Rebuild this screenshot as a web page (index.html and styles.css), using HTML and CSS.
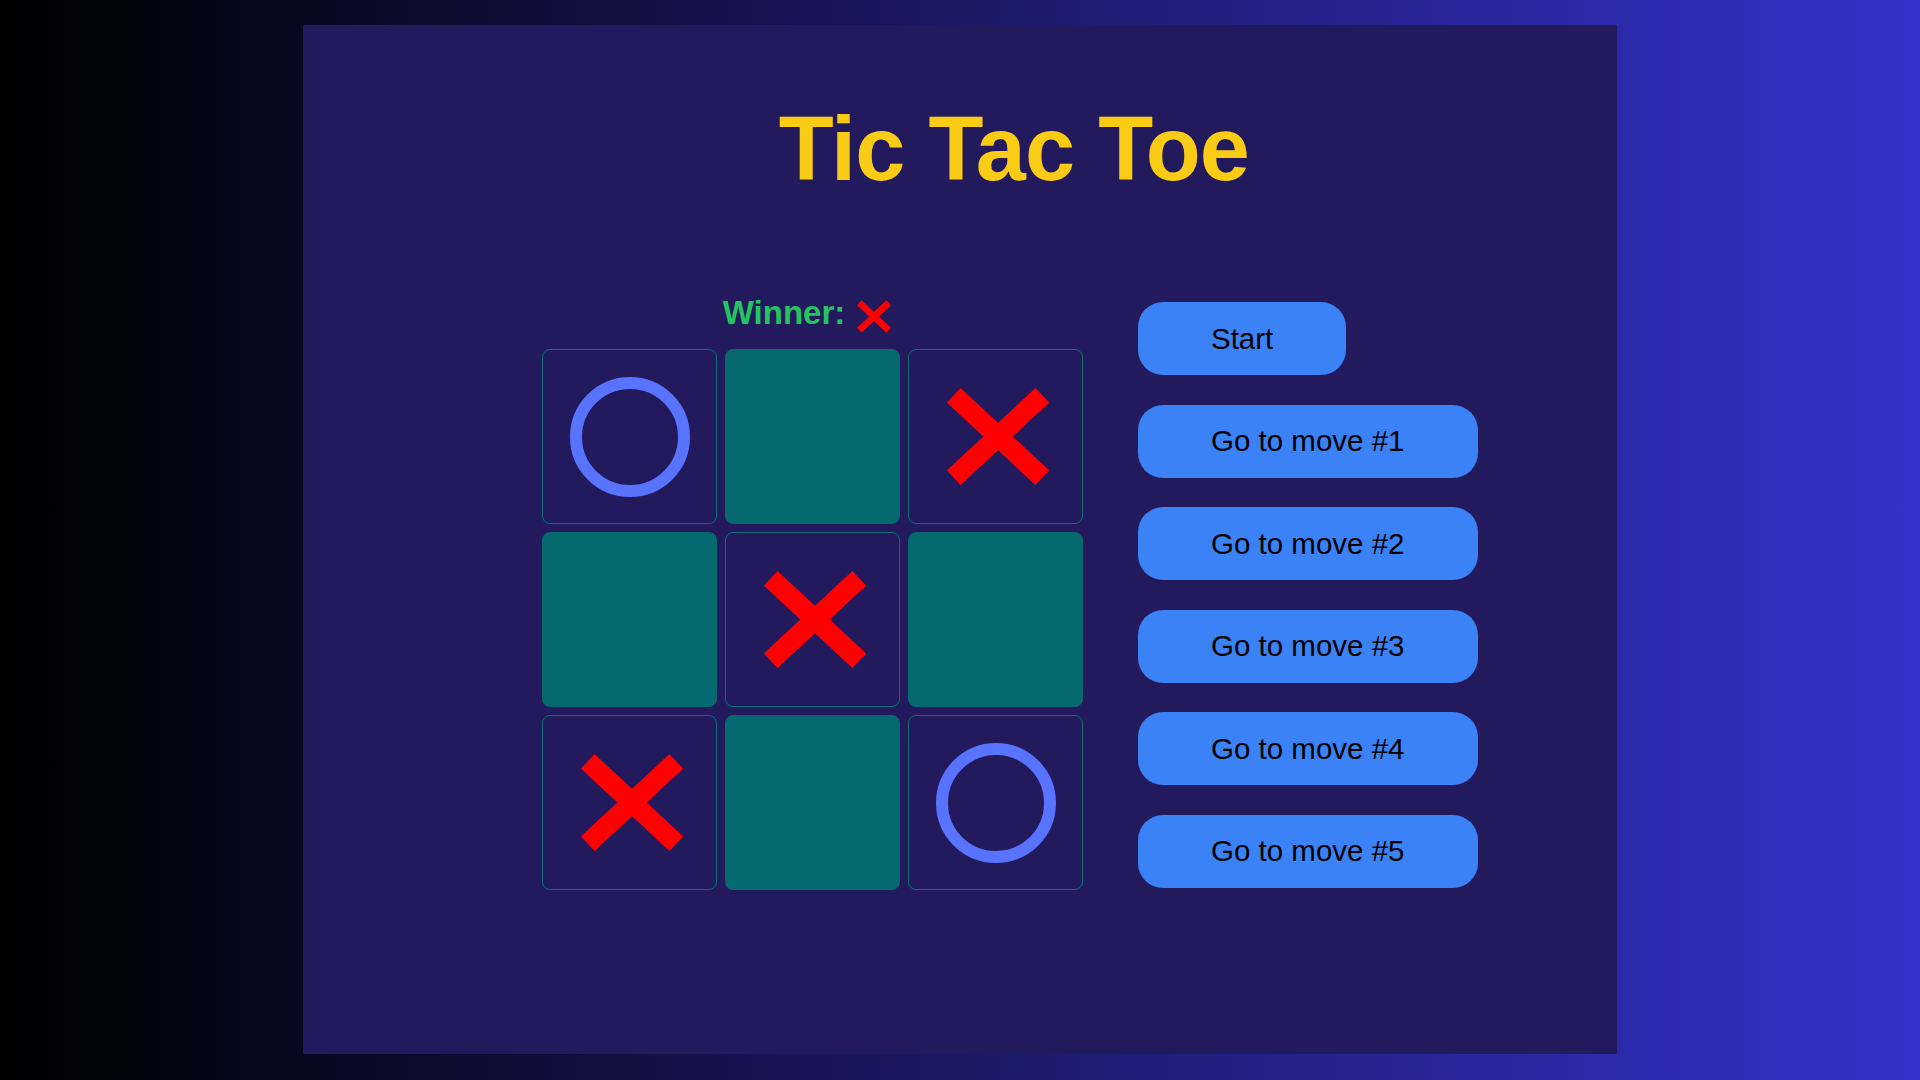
FILE: index.html
```html
<!DOCTYPE html>
<html lang="en">
<head>
<meta charset="utf-8">
<title>Tic Tac Toe</title>
<link rel="stylesheet" href="styles.css">
</head>
<body>
<main class="panel">
  <div class="game-wrap">
    <h1 class="title">Tic Tac Toe</h1>
    <div class="game">
      <div class="board-col">
        <div class="status"><span class="status-text">Winner:</span><svg class="x-small" viewBox="0 0 102 97" aria-label="X"><path d="M6.8 7.3 L95.2 89.7 M95.2 7.3 L6.8 89.7" /></svg></div>
        <div class="board">
          <button class="cell filled"><span class="o"></span></button>
          <button class="cell empty"></button>
          <button class="cell filled"><svg class="x-big" viewBox="0 0 102 97"><path d="M6.8 7.3 L95.2 89.7 M95.2 7.3 L6.8 89.7" /></svg></button>
          <button class="cell empty"></button>
          <button class="cell filled"><svg class="x-big" viewBox="0 0 102 97"><path d="M6.8 7.3 L95.2 89.7 M95.2 7.3 L6.8 89.7" /></svg></button>
          <button class="cell empty"></button>
          <button class="cell filled"><svg class="x-big" viewBox="0 0 102 97"><path d="M6.8 7.3 L95.2 89.7 M95.2 7.3 L6.8 89.7" /></svg></button>
          <button class="cell empty"></button>
          <button class="cell filled"><span class="o"></span></button>
        </div>
      </div>
      <ol class="moves">
        <li><button class="move-btn">Start</button></li>
        <li><button class="move-btn">Go to move #1</button></li>
        <li><button class="move-btn">Go to move #2</button></li>
        <li><button class="move-btn">Go to move #3</button></li>
        <li><button class="move-btn">Go to move #4</button></li>
        <li><button class="move-btn">Go to move #5</button></li>
      </ol>
    </div>
  </div>
</main>
</body>
</html>
```

FILE: styles.css
```css
* { box-sizing: border-box; }

html, body {
  margin: 0;
  padding: 0;
}

body {
  height: 1080px;
  overflow: hidden;
  background: linear-gradient(to right, #000000 0%, #3631cb 100%);
  font-family: "Liberation Sans", Arial, Helvetica, sans-serif;
  display: flex;
  justify-content: center;
  padding-top: 25px;
}

.panel {
  width: 1314px;
  height: 1029px;
  background: #221a5d;
  padding: 78.5px 0 0 239px;
}

.game-wrap {
  width: fit-content;
}

.title {
  margin: 0 0 99px 0;
  padding-left: 8px;
  text-align: center;
  color: #facc15;
  font-size: 90px;
  line-height: 90px;
  font-weight: 700;
  letter-spacing: -0.9px;
}

.game {
  display: flex;
  align-items: flex-start;
  gap: 55px;
}

.board-col {
  display: flex;
  flex-direction: column;
}

.status {
  text-align: center;
  padding-right: 11px;
  color: #22c55e;
  font-size: 33px;
  line-height: 40px;
  font-weight: 700;
  margin-bottom: 16.5px;
  white-space: nowrap;
}

.x-small {
  width: 34px;
  height: 33px;
  margin-left: 12px;
  vertical-align: -9.4px;
}

.x-small path,
.x-big path {
  stroke: #ff0000;
  stroke-width: 20;
  stroke-linecap: butt;
  fill: none;
}

.board {
  display: grid;
  grid-template-columns: repeat(3, 175px);
  grid-auto-rows: 175px;
  gap: 8px;
}

.cell {
  margin: 0;
  padding: 0;
  border: 1px solid #0a6f76;
  border-radius: 8px;
  background: transparent;
  display: flex;
  align-items: center;
  justify-content: center;
}

.cell.empty {
  background: #05696f;
  border-color: #05696f;
}

.o {
  display: block;
  width: 120px;
  height: 120px;
  border: 12px solid #5873ff;
  border-radius: 50%;
}

.x-big {
  width: 102px;
  height: 97px;
  margin-left: 5px;
}

.moves {
  list-style: none;
  margin: 0;
  padding: 9.5px 0 0 0;
  display: flex;
  flex-direction: column;
  align-items: flex-start;
  gap: 29.5px;
}

.moves li {
  margin: 0;
  padding: 0;
}

.move-btn {
  height: 73px;
  padding: 0 73px;
  border: none;
  border-radius: 25px;
  background: #3b82f6;
  color: #000000;
  font-family: "Liberation Sans", Arial, Helvetica, sans-serif;
  font-size: 29.5px;
  line-height: 1;
  white-space: nowrap;
  display: flex;
  align-items: center;
}
```
